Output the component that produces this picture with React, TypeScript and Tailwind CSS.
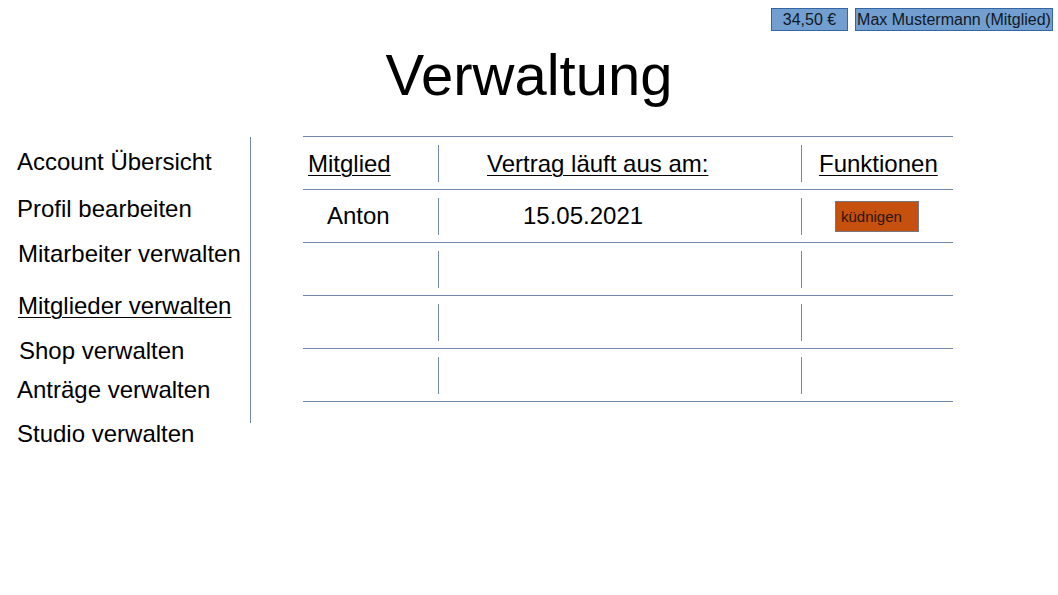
import React from "react";

const font = { fontFamily: '"Liberation Sans", Arial, sans-serif' };

function Sep() {
  return <div className="w-px self-stretch mt-[8px] mb-[7px] bg-[#7289ab]" />;
}

function Row({ c1, c2, c3 }: { c1?: React.ReactNode; c2?: React.ReactNode; c3?: React.ReactNode }) {
  return (
    <div className="flex h-[53px] border-b border-[#7289ab]">
      <div className="w-[135px] flex items-center">{c1}</div>
      <Sep />
      <div className="w-[362px] flex items-center">{c2}</div>
      <Sep />
      <div className="w-[151px] flex items-center">{c3}</div>
    </div>
  );
}

export default function App() {
  return (
    <div className="w-[1058px] h-[595px] bg-white text-black overflow-hidden" style={font}>
      {/* top bar */}
      <div className="flex justify-end gap-[7px] pt-[8px] pr-[5px]">
        <div className="w-[77px] h-[23px] bg-[#729fcf] border border-[#3465a4] flex items-center justify-center text-[16px] leading-none text-[#111827]">
          34,50 €
        </div>
        <div className="w-[198px] h-[23px] bg-[#729fcf] border border-[#3465a4] flex items-center justify-center text-[16px] leading-none text-[#111827]">
          Max Mustermann (Mitglied)
        </div>
      </div>

      {/* title */}
      <div className="mt-[15px] h-[57px] text-center text-[58px] leading-[57px]">Verwaltung</div>

      {/* main */}
      <div className="flex mt-[33px]">
        {/* sidebar */}
        <div className="w-[251px] h-[286px] mt-[1px] border-r border-[#7289ab] flex flex-col text-[24px] leading-[28px]">
          <div className="mt-[11px] ml-[17px] whitespace-nowrap">Account Übersicht</div>
          <div className="mt-[19px] ml-[17px] whitespace-nowrap">Profil bearbeiten</div>
          <div className="mt-[17px] ml-[18px] whitespace-nowrap">Mitarbeiter verwalten</div>
          <div className="mt-[24px] ml-[18px] whitespace-nowrap underline underline-offset-[3px] decoration-1">Mitglieder verwalten</div>
          <div className="mt-[17px] ml-[19px] whitespace-nowrap">Shop verwalten</div>
          <div className="mt-[11px] ml-[17px] whitespace-nowrap">Anträge verwalten</div>
          <div className="mt-[16px] ml-[17px] whitespace-nowrap">Studio verwalten</div>
        </div>

        {/* table */}
        <div className="ml-[52px] w-[650px] border-t border-[#7289ab] text-[24px] leading-[28px]">
          <Row
            c1={<span className="ml-[5px] mt-[1px] underline underline-offset-[3px] decoration-1">Mitglied</span>}
            c2={<span className="ml-[48px] mt-[1px] underline underline-offset-[3px] decoration-1 whitespace-nowrap">Vertrag läuft aus am:</span>}
            c3={<span className="ml-[17px] mt-[1px] underline underline-offset-[3px] decoration-1">Funktionen</span>}
          />
          <Row
            c1={<span className="ml-[24px]">Anton</span>}
            c2={<span className="ml-[84px]">15.05.2021</span>}
            c3={
              <div className="ml-[33px] w-[84px] h-[31px] bg-[#c6500d] border border-[#76777f] flex items-center pl-[5px] text-[15px] leading-none text-[#2a1608]">
                küdnigen
              </div>
            }
          />
          <Row />
          <Row />
          <Row />
        </div>
      </div>
    </div>
  );
}
